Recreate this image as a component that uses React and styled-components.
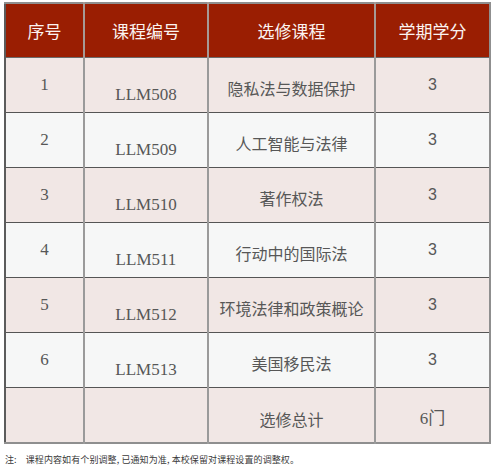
import React from 'react';
import styled, { createGlobalStyle } from 'styled-components';

const courses = [
  { no: 1, code: 'LLM508', name: '隐私法与数据保护', credit: 3 },
  { no: 2, code: 'LLM509', name: '人工智能与法律', credit: 3 },
  { no: 3, code: 'LLM510', name: '著作权法', credit: 3 },
  { no: 4, code: 'LLM511', name: '行动中的国际法', credit: 3 },
  { no: 5, code: 'LLM512', name: '环境法律和政策概论', credit: 3 },
  { no: 6, code: 'LLM513', name: '美国移民法', credit: 3 },
];

const GlobalStyle = createGlobalStyle`
  html, body {
    margin: 0;
    background: #ffffff;
  }
`;

const Page = styled.div`
  width: 498px;
  height: 472px;
  padding: 2px 0 0 4px;
  box-sizing: border-box;
  font-family: "Noto Sans CJK SC", "Liberation Sans", sans-serif;
`;

const Table = styled.table`
  width: 487px;
  border-collapse: collapse;
  table-layout: fixed;
  border: 2px solid #8f8f8f;
  border-left-color: #5c5c5c;
`;

const HeadCell = styled.th`
  height: 53px;
  padding: 0;
  background: #9a1e02;
  color: #fbf3f0;
  font-weight: 400;
  font-size: 17px;
  border-left: 2px solid #a69a96;
  border-bottom: 1.5px solid #6b6b6b;
  &:first-child { border-left: none; }
`;

const Row = styled.tr`
  background: ${(p) => (p.$alt ? '#f6f7f7' : '#f1e7e5')};
`;

const Cell = styled.td`
  height: 54px;
  padding: 0;
  text-align: center;
  vertical-align: middle;
  color: #575757;
  border-left: 2px solid #9a9a9a;
  border-bottom: 1.5px solid #555555;
  font-family: ${(p) =>
    p.$serif
      ? '"Liberation Serif", "Noto Sans CJK SC", serif'
      : p.$sans
      ? '"Liberation Sans", "Noto Sans CJK SC", sans-serif'
      : '"Noto Sans CJK SC", sans-serif'};
  font-size: ${(p) => p.$size || 16}px;
  &:first-child { border-left: none; }
`;

/* pushes a cell's text below the middle line, as the source sheet does */
const Text = styled.span`
  display: block;
  line-height: 20px;
  margin-top: ${(p) => p.$drop || 0}px;
`;

const Note = styled.p`
  margin: 9px 0 0 1px;
  font-size: 9px;
  color: #3a3a3a;
  letter-spacing: 0.1px;
  span { margin-right: 9px; }
`;

export default function App() {
  return (
    <Page>
      <GlobalStyle />
      <Table>
        <colgroup>
          <col style={{ width: 79 }} />
          <col style={{ width: 124 }} />
          <col style={{ width: 167 }} />
          <col style={{ width: 115 }} />
        </colgroup>
        <thead>
          <tr>
            <HeadCell>序号</HeadCell>
            <HeadCell>课程编号</HeadCell>
            <HeadCell>选修课程</HeadCell>
            <HeadCell>学期学分</HeadCell>
          </tr>
        </thead>
        <tbody>
          {courses.map((c, i) => (
            <Row key={c.code} $alt={i % 2 === 1}>
              <Cell $serif $size={17}><Text>{c.no}</Text></Cell>
              <Cell $serif $size={17}><Text $drop={20}>{c.code}</Text></Cell>
              <Cell><Text $drop={6}>{c.name}</Text></Cell>
              <Cell $sans $size={16}><Text>{c.credit}</Text></Cell>
            </Row>
          ))}
          <Row>
            <Cell />
            <Cell />
            <Cell><Text $drop={8}>选修总计</Text></Cell>
            <Cell $serif $size={17}><Text $drop={8}>6门</Text></Cell>
          </Row>
        </tbody>
      </Table>
      <Note><span>注:</span>课程内容如有个别调整, 已通知为准, 本校保留对课程设置的调整权。</Note>
    </Page>
  );
}
